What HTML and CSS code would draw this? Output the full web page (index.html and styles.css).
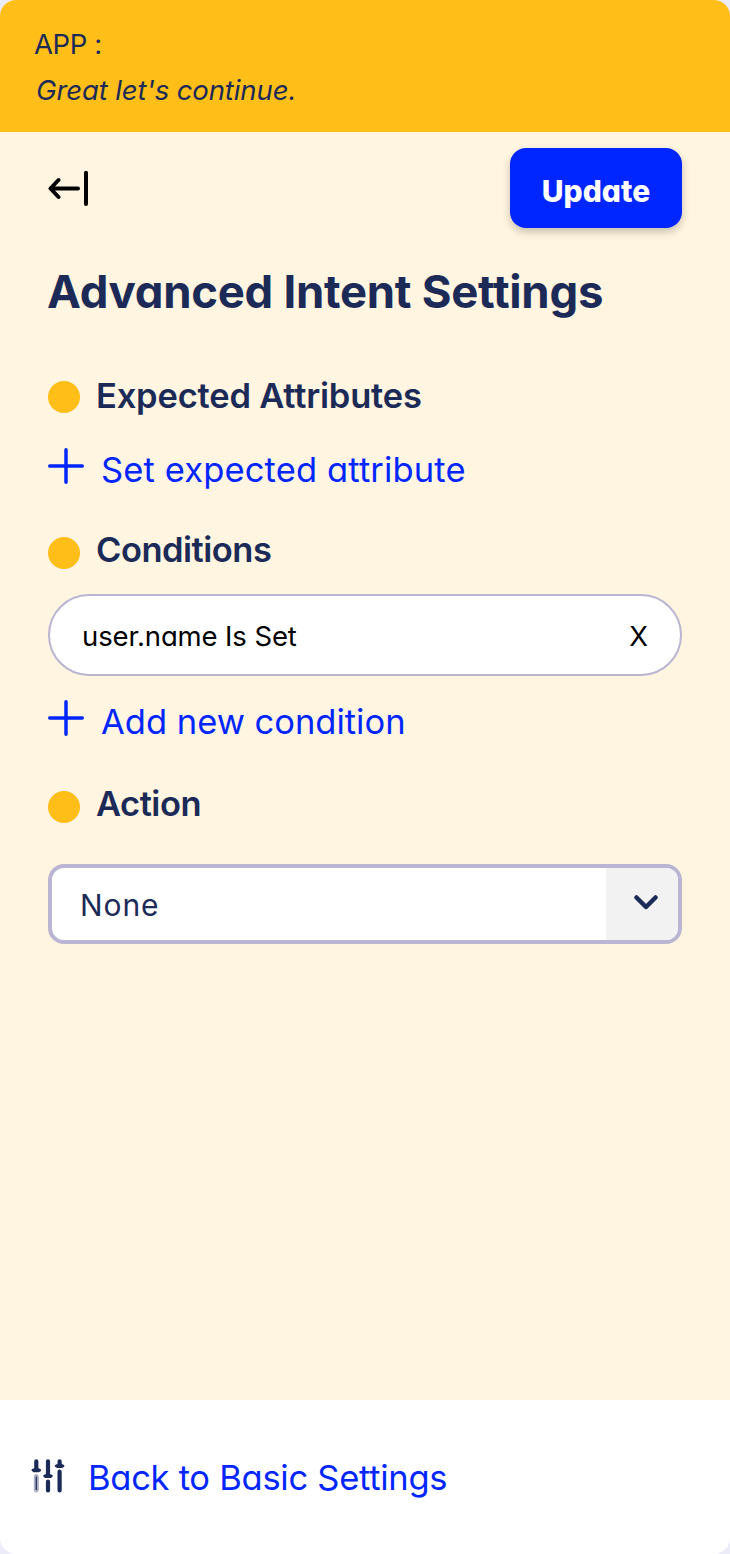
FILE: index.html
```html
<!DOCTYPE html>
<html lang="en">
<head>
<meta charset="utf-8">
<title>Advanced Intent Settings</title>
<link rel="stylesheet" href="styles.css">
</head>
<body>
<main class="panel">
  <header class="message">
    <div class="message-source"><span>APP :</span></div>
    <div class="message-text"><span>Great let's continue.</span></div>
  </header>
  <section class="content">
    <div class="toolbar">
      <svg class="back-icon" width="42" height="38" viewBox="0 0 42 38" fill="none" stroke="#000" stroke-width="4" stroke-linecap="round" stroke-linejoin="round"><path d="M10.500 11 2.500 19.500 10.500 28M3 19.500H30M38 3.800V35"/></svg>
      <button class="update"><span>Update</span></button>
    </div>
    <h1 class="title"><span>Advanced Intent Settings</span></h1>
    <h2 class="section-title expected"><i class="dot"></i><span>Expected Attributes</span></h2>
    <a class="add-link set-link"><svg class="plus" width="36" height="36" viewBox="0 0 36 36"><path d="M18 1.750V34.250M1.750 18H34.250"/></svg><span>Set expected attribute</span></a>
    <h2 class="section-title conditions"><i class="dot"></i><span>Conditions</span></h2>
    <div class="condition"><span class="condition-name">user.name Is Set</span><span class="remove">X</span></div>
    <a class="add-link new-link"><svg class="plus" width="36" height="36" viewBox="0 0 36 36"><path d="M18 1.750V34.250M1.750 18H34.250"/></svg><span>Add new condition</span></a>
    <h2 class="section-title action"><i class="dot"></i><span>Action</span></h2>
    <div class="select">
      <span class="select-value">None</span>
      <span class="select-arrow"><svg width="24" height="16" viewBox="0 0 24 16" fill="none" stroke="#1b2a57" stroke-width="4.500" stroke-linecap="round" stroke-linejoin="round"><path d="M2.500 2.500 12 12 21.500 2.500"/></svg></span>
    </div>
  </section>
  <footer class="footer">
    <svg class="sliders" width="34" height="36" viewBox="0 0 34 36" fill="none" stroke="#1b2a57" stroke-linecap="round" stroke-linejoin="round"><path stroke-width="4.200" d="M5.300 3.300V11M17 3.300V17M28.600 3.300V7M17 23.700V32.500M28.600 13.700V32.500"/><path stroke-width="2.600" fill="#1b2a57" d="M1.800 12.200 5.300 10.800 8.800 12.200 7.500 13H3.100ZM13.500 18 17 16.600 20.500 18 19.200 18.800H14.800ZM25.100 7.900 28.600 6.500 32.100 7.900 30.800 8.700H26.400Z"/><rect x="3.300" y="16.500" width="4" height="17.500" rx="2" stroke="#a9aec0" stroke-width="1" fill="#a9aec0"/><path stroke-width="1.200" d="M5.300 19V31.500"/></svg>
    <a class="basic-link">Back to Basic Settings</a>
  </footer>
</main>
</body>
</html>
```
FILE: styles.css
```css
* { box-sizing: border-box; }
body { margin: 0; background: #ecebf8; font-family: Inter, sans-serif; font-feature-settings: "cv11", "ss03"; color: #1b2a57; }
.panel { width: 730px; height: 1554px; display: flex; flex-direction: column; border-radius: 16px; overflow: hidden; background: #fff; white-space: nowrap; }
.message { height: 132px; padding: 21px 34px; background: #ffbe18; font-size: 27.5px; line-height: 46px; }
.message-source { letter-spacing: -0.4px; }
.message-text { font-style: italic; padding-left: 2px; letter-spacing: -0.1px; }
.content { height: 1268px; padding: 16px 48px; background: #fff5e0; }
.toolbar { display: flex; justify-content: space-between; height: 80px; }
.back-icon { margin-top: 21px; }
.update { width: 172px; height: 80px; padding: 6px 0 0; border: 0; border-radius: 16px; background: #0026ff; color: #fff; font: 800 30px/74px Inter, sans-serif; font-feature-settings: "cv11"; box-shadow: 0 4px 8px rgba(0,0,0,.22); }
.title { margin: 34px 0 0 -1px; font-size: 45.5px; font-weight: 700; line-height: 60px; letter-spacing: -0.27px; }
.section-title { display: flex; gap: 16px; align-items: center; margin: 0; font-size: 34.5px; font-weight: 600; line-height: 48px; height: 48px; letter-spacing: -0.5px; }
.dot { width: 32px; height: 32px; margin-top: 6px; border-radius: 50%; background: #ffbe18; }
.expected { margin-top: 50px; letter-spacing: -0.2px; }
.expected .dot { margin-top: 2px; }
.add-link { display: flex; align-items: center; gap: 17px; height: 48px; line-height: 48px; font-size: 34.5px; color: #0026ff; }
.plus { margin-top: -8px; fill: none; stroke: #0026ff; stroke-width: 3.5; stroke-linecap: round; }
.set-link { margin-top: 26px; letter-spacing: 0.14px; }
.conditions { margin-top: 32px; }
.condition { display: flex; align-items: center; justify-content: space-between; height: 82px; margin-top: 20px; padding: 2px 32px 0; border: 2px solid #b9b5d2; border-radius: 41px; background: #fff; color: #000; font-size: 27.5px; letter-spacing: -0.12px; }
.new-link { margin-top: 22px; }
.action { margin-top: 34px; }
.select { display: flex; height: 80px; margin-top: 36px; border: 4px solid #b9b5d2; border-radius: 16px; background: #fff; overflow: hidden; }
.select-value { flex: 1; padding-left: 28px; font-size: 30px; line-height: 75px; letter-spacing: 0.9px; }
.select-arrow { width: 72px; background: #f2f2f2; padding: 27px 0 0 28px; }
.footer { height: 154px; padding: 0 31px; display: flex; align-items: center; gap: 23px; }
.sliders { margin-top: -2px; }
.basic-link { font-size: 34.5px; color: #0026ff; line-height: 48px; margin-top: 2px; letter-spacing: -0.27px; }
```
